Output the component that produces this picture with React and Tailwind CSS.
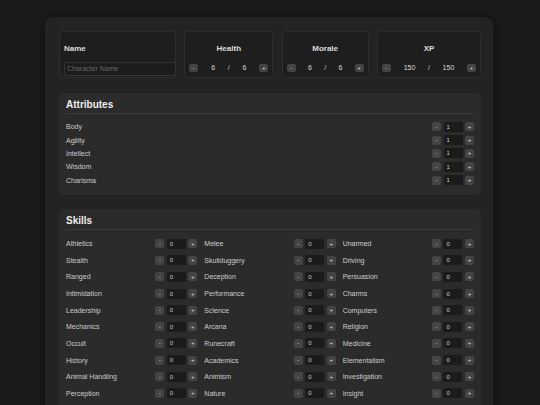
import React from "react";

const font = { fontFamily: '"Liberation Sans", Arial, sans-serif' };

function Btn({ children }) {
  return (
    <div className="flex h-[9px] w-[9px] shrink-0 items-center justify-center rounded-[2px] bg-[#444444] text-[6px] leading-none text-[#dddddd]">
      {children}
    </div>
  );
}

function Counter({ value }) {
  return (
    <div className="flex shrink-0 items-center gap-[2.5px]">
      <Btn>-</Btn>
      <div className="flex h-[10px] w-[19px] items-center rounded-[1px] bg-[#1b1b1b] pl-[3px] text-[6px] leading-none text-[#cccccc]">
        {value}
      </div>
      <Btn>+</Btn>
    </div>
  );
}

function StatCard({ title, cur, max, w }) {
  return (
    <div className={`${w} h-[47px] rounded-[4px] border border-[#2e2e2e] bg-[#1e1e1e] px-[4px] pt-[12px]`}>
      <div className="h-[10px] text-center text-[8px] font-bold leading-[10px] text-[#dddddd]">{title}</div>
      <div className="mt-[6.5px] flex h-[14px] items-center justify-between">
        <div className="flex h-[8px] w-[9px] items-center justify-center rounded-[2px] bg-[#444444] text-[6px] leading-none text-[#dddddd]">-</div>
        <div className="w-[14px] text-center text-[7px] leading-none text-[#dddddd]">{cur}</div>
        <div className="text-[7px] leading-none text-[#cccccc]">/</div>
        <div className="w-[14px] text-center text-[7px] leading-none text-[#dddddd]">{max}</div>
        <div className="flex h-[8px] w-[9px] items-center justify-center rounded-[2px] bg-[#444444] text-[6px] leading-none text-[#dddddd]">+</div>
      </div>
    </div>
  );
}

const attributes = ["Body", "Agility", "Intellect", "Wisdom", "Charisma"];

const skills = [
  "Athletics", "Melee", "Unarmed",
  "Stealth", "Skullduggery", "Driving",
  "Ranged", "Deception", "Persuasion",
  "Intimidation", "Performance", "Charms",
  "Leadership", "Science", "Computers",
  "Mechanics", "Arcana", "Religion",
  "Occult", "Runecraft", "Medicine",
  "History", "Academics", "Elementalism",
  "Animal Handling", "Animism", "Investigation",
  "Perception", "Nature", "Insight",
];

export default function App() {
  return (
    <div className="h-[405px] overflow-hidden bg-[#1b1b1b] pt-[17px]" style={font}>
      <div className="ml-[45px] w-[448px] rounded-[8px] bg-[#232323] pb-[20px] pl-[14px] pr-[12px] pt-[14px] shadow-[0_0_12px_rgba(0,0,0,0.5)]">
        {/* top cards */}
        <div className="flex justify-between">
          <div className="h-[47px] w-[117px] rounded-[4px] border border-[#2e2e2e] bg-[#1e1e1e] pl-[4px] pt-[12px]">
            <div className="h-[10px] text-[8px] font-bold leading-[10px] text-[#dddddd]">Name</div>
            <input
              className="mt-[6.5px] h-[14px] w-[112px] rounded-[2px] border border-[#333333] bg-[#1c1c1c] px-[2px] text-[7px] text-[#cccccc] outline-none placeholder:text-[#666666]"
              placeholder="Character Name"
              style={font}
            />
          </div>
          <StatCard title="Health" cur="6" max="6" w="w-[89px]" />
          <StatCard title="Morale" cur="6" max="6" w="w-[87px]" />
          <StatCard title="XP" cur="150" max="150" w="w-[104px]" />
        </div>

        {/* attributes */}
        <div className="mt-[15px] rounded-[5px] bg-[#2b2b2b] px-[7px] pb-[8px] pt-[6px]">
          <div className="border-b border-[#3c3c3c] pb-[2px] text-[10px] font-bold leading-[12px] text-[#eeeeee]">Attributes</div>
          <div className="mt-[6px] flex flex-col">
            {attributes.map((a) => (
              <div key={a} className="flex h-[13.35px] items-center justify-between">
                <span className="text-[7px] leading-none text-[#cccccc]">{a}</span>
                <Counter value="1" />
              </div>
            ))}
          </div>
        </div>

        {/* skills */}
        <div className="mt-[14px] rounded-[5px] bg-[#2b2b2b] px-[7px] pb-[8px] pt-[6px]">
          <div className="border-b border-[#3c3c3c] pb-[2px] text-[10px] font-bold leading-[12px] text-[#eeeeee]">Skills</div>
          <div className="mt-[5.5px] grid grid-cols-3 gap-x-[7px]">
            {skills.map((s) => (
              <div key={s} className="flex h-[16.67px] items-center justify-between">
                <span className="text-[7px] leading-none text-[#cccccc]">{s}</span>
                <Counter value="0" />
              </div>
            ))}
          </div>
        </div>
      </div>
    </div>
  );
}
